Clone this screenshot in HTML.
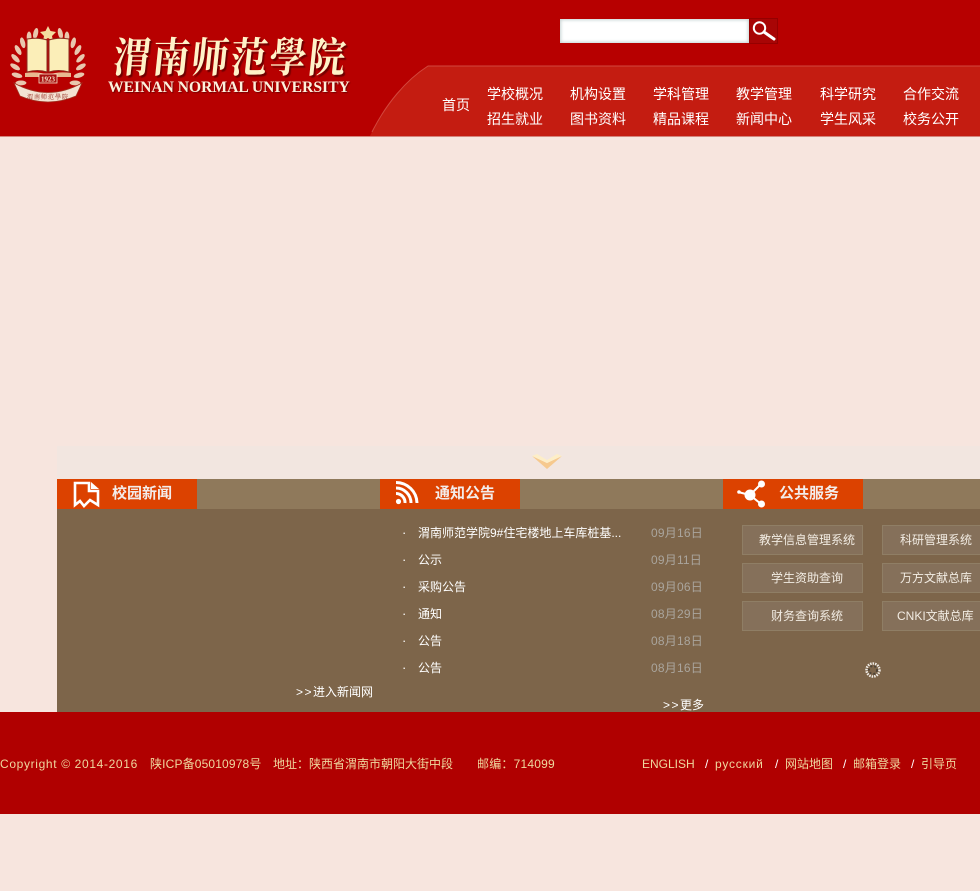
<!DOCTYPE html>
<html lang="zh">
<head>
<meta charset="utf-8">
<title>渭南师范学院</title>
<style>
html,body{margin:0;padding:0}
body{width:980px;height:891px;overflow:hidden;background:#f7e5de;position:relative;font-family:"Liberation Sans","WenQuanYi Zen Hei","Noto Sans CJK SC",sans-serif;font-size:13px}
.a{position:absolute;white-space:nowrap}
.nav{color:#fff;font-size:14px;line-height:20px;font-family:"Liberation Sans","Noto Sans CJK SC",sans-serif}
.tab{color:#f3ecea;font-size:15px;font-weight:bold;line-height:20px;font-family:"Liberation Sans","Noto Sans CJK SC",sans-serif}
.li{color:#fff;font-size:12px;line-height:18px;font-family:"Liberation Sans","Noto Sans CJK SC",sans-serif}
.d{color:#aaa59d;font-size:12px;line-height:18px;letter-spacing:.2px;font-family:"Liberation Sans","Noto Sans CJK SC",sans-serif}
.btn{box-sizing:border-box;height:30px;border:1px solid #8f7e65;background:#85705a;color:#f2ece3;font-size:12px;line-height:28px;font-family:"Liberation Sans","Noto Sans CJK SC",sans-serif}
.f{color:#efd79e;font-size:12px;line-height:18px;font-family:"Liberation Sans","Noto Sans CJK SC",sans-serif}
.s{color:#fff;font-size:13px;line-height:18px}
.g{letter-spacing:1.5px}
</style>
</head>
<body>
<div class="a" style="left:0;top:0;width:980px;height:136px;background:#b70000"></div>
<svg class="a" style="left:0;top:0" width="980" height="137" viewBox="0 0 980 137">
<path d="M370 136C384 106 405 80 428 66H980V136Z" fill="#c41c11"/>
<path d="M372 132C386 104 406 80 428 66H980" fill="none" stroke="#d2483e" stroke-width="1"/>
<rect x="0" y="136" width="980" height="1" fill="#d5847c"/>
<g transform="translate(48 64)">
<path d="M0 -38L2.5 -33 8 -32 4 -28 5 -23 0 -26 -5 -23 -4 -28 -8 -32 -2.5 -33Z" fill="#f3dca0"/>
<g fill="#e9c7ae">
<ellipse rx="2.4" ry="5.5" transform="rotate(-125) translate(0 -33) rotate(35)"/>
<ellipse rx="2.4" ry="5.5" transform="rotate(-110) translate(0 -33) rotate(35)"/>
<ellipse rx="2.4" ry="5.5" transform="rotate(-95) translate(0 -33) rotate(35)"/>
<ellipse rx="2.4" ry="5.5" transform="rotate(-80) translate(0 -33) rotate(35)"/>
<ellipse rx="2.4" ry="5.5" transform="rotate(-65) translate(0 -33) rotate(35)"/>
<ellipse rx="2.4" ry="5.5" transform="rotate(-50) translate(0 -33) rotate(35)"/>
<ellipse rx="2.4" ry="5.5" transform="rotate(-35) translate(0 -33) rotate(35)"/>
<ellipse rx="2.4" ry="5.5" transform="rotate(-22) translate(0 -33) rotate(35)"/>
<ellipse rx="2.4" ry="5.5" transform="rotate(125) translate(0 -33) rotate(-35)"/>
<ellipse rx="2.4" ry="5.5" transform="rotate(110) translate(0 -33) rotate(-35)"/>
<ellipse rx="2.4" ry="5.5" transform="rotate(95) translate(0 -33) rotate(-35)"/>
<ellipse rx="2.4" ry="5.5" transform="rotate(80) translate(0 -33) rotate(-35)"/>
<ellipse rx="2.4" ry="5.5" transform="rotate(65) translate(0 -33) rotate(-35)"/>
<ellipse rx="2.4" ry="5.5" transform="rotate(50) translate(0 -33) rotate(-35)"/>
<ellipse rx="2.4" ry="5.5" transform="rotate(35) translate(0 -33) rotate(-35)"/>
<ellipse rx="2.4" ry="5.5" transform="rotate(22) translate(0 -33) rotate(-35)"/>
</g>
<path d="M-21 -25Q-10 -27 -1 -24V8Q-10 5 -21 8Z" fill="#fbeeb8" stroke="#8c2a20"/>
<path d="M21 -25Q10 -27 1 -24V8Q10 5 21 8Z" fill="#fbeeb8" stroke="#8c2a20"/>
<path d="M-23 9Q-10 7 0 11Q10 7 23 9V13H-23Z" fill="#e8b890"/>
<rect x="-9" y="10" width="18" height="9" fill="#a81010" stroke="#f7e3c8" stroke-width=".8"/>
<text x="0" y="17.5" text-anchor="middle" font-size="7" font-weight="bold" fill="#f7e3c8" font-family="Liberation Serif,serif">1923</text>
<path d="M-34 19Q0 38 34 19L28 32Q0 44 -28 32Z" fill="#f3e2d2" stroke="#a03020" stroke-width=".8"/>
<text x="0" y="35" text-anchor="middle" font-size="6" fill="#8c1a10" font-family="Noto Serif CJK SC,serif" letter-spacing="1">渭南师范學院</text>
</g>
</svg>
<div class="a" style="left:114px;top:26px;font-size:37px;line-height:56px;letter-spacing:2px;color:#fff2c8;font-weight:bold;font-family:'Noto Serif CJK SC',serif;text-shadow:2px 2px 1px #6d0000;transform:skewX(-6deg) scaleY(1.12);transform-origin:left center">渭南师范學院</div>
<div class="a" style="left:108px;top:79px;font-size:15.6px;line-height:18px;color:#fdf0dc;font-weight:bold;font-family:'Liberation Serif',serif;text-shadow:1px 1px 1px #700000">WEINAN NORMAL UNIVERSITY</div>

<div class="a" style="left:560px;top:19px;width:189px;height:24px;box-sizing:border-box;background:#fff;box-shadow:inset 0 0 3px 1px #c5d2d2"></div>
<div class="a" style="left:749px;top:18px;width:29px;height:26px;background:#a80505;box-sizing:border-box;border:1px solid #950000"></div>
<svg class="a" style="left:749px;top:18px" width="29" height="26" viewBox="0 0 29 26"><circle cx="10.5" cy="10" r="5.7" fill="none" stroke="#fff" stroke-width="2"/><path d="M15 14L25 21" stroke="#fff" stroke-width="3" stroke-linecap="round"/></svg>

<div class="a nav" style="left:442px;top:95px">首页</div>
<div class="a nav" style="left:487px;top:84px">学校概况</div><div class="a nav" style="left:570px;top:84px">机构设置</div><div class="a nav" style="left:653px;top:84px">学科管理</div><div class="a nav" style="left:736px;top:84px">教学管理</div><div class="a nav" style="left:820px;top:84px">科学研究</div><div class="a nav" style="left:903px;top:84px">合作交流</div>
<div class="a nav" style="left:487px;top:109px">招生就业</div><div class="a nav" style="left:570px;top:109px">图书资料</div><div class="a nav" style="left:653px;top:109px">精品课程</div><div class="a nav" style="left:736px;top:109px">新闻中心</div><div class="a nav" style="left:820px;top:109px">学生风采</div><div class="a nav" style="left:903px;top:109px">校务公开</div>

<div class="a" style="left:57px;top:446px;width:923px;height:33px;background:#f2e6e0"></div>
<svg class="a" style="left:531px;top:453px" width="32" height="17" viewBox="0 0 32 17"><path d="M1 3L16 10 31 3 16 16Z" fill="#f6c98e"/><path d="M1 3L6 1 16 7 26 1 31 3 16 10Z" fill="#fdeec8"/></svg>
<div class="a" style="left:57px;top:479px;width:923px;height:30px;background:#8f795b"></div>
<div class="a" style="left:57px;top:509px;width:923px;height:203px;background:#7d654a"></div>

<div class="a" style="left:57px;top:479px;width:140px;height:30px;background:#dc4200"></div>
<div class="a" style="left:380px;top:479px;width:140px;height:30px;background:#dc4200"></div>
<div class="a" style="left:723px;top:479px;width:140px;height:30px;background:#dc4200"></div>
<svg class="a" style="left:57px;top:479px" width="140" height="30" viewBox="0 0 140 30"><path d="M18 4H32V12H41V26L33 21 27 27 23 22 18 26Z" fill="none" stroke="#fff" stroke-width="2.6"/><path d="M34 3L42 10H34Z" fill="#fff"/></svg>
<svg class="a" style="left:380px;top:479px" width="140" height="30" viewBox="0 0 140 30"><circle cx="18.5" cy="22.5" r="2.6" fill="#fff"/><path d="M16 14.5A9 9 0 0 1 25 24M16 9A15 15 0 0 1 31 24M16 3.5A21 21 0 0 1 37 24" fill="none" stroke="#fff" stroke-width="3"/></svg>
<svg class="a" style="left:723px;top:479px" width="140" height="30" viewBox="0 0 140 30"><path d="M15 13L27 16M38 5L27 16 38 25" fill="none" stroke="#fff" stroke-width="2"/><circle cx="27" cy="16" r="5.5" fill="#fff"/><circle cx="38.5" cy="5" r="3.5" fill="#fff"/><circle cx="38.5" cy="25" r="3.5" fill="#fff"/><circle cx="16" cy="13" r="1.8" fill="#fff"/></svg>
<div class="a tab" style="left:112px;top:484px">校园新闻</div>
<div class="a tab" style="left:435px;top:484px">通知公告</div>
<div class="a tab" style="left:779px;top:484px">公共服务</div>

<div class="a s" style="left:402px;top:524px">·</div><div class="a li" style="left:418px;top:524px">渭南师范学院9#住宅楼地上车库桩基...</div><div class="a d" style="left:651px;top:524px">09月16日</div>
<div class="a s" style="left:402px;top:551px">·</div><div class="a li" style="left:418px;top:551px">公示</div><div class="a d" style="left:651px;top:551px">09月11日</div>
<div class="a s" style="left:402px;top:578px">·</div><div class="a li" style="left:418px;top:578px">采购公告</div><div class="a d" style="left:651px;top:578px">09月06日</div>
<div class="a s" style="left:402px;top:605px">·</div><div class="a li" style="left:418px;top:605px">通知</div><div class="a d" style="left:651px;top:605px">08月29日</div>
<div class="a s" style="left:402px;top:632px">·</div><div class="a li" style="left:418px;top:632px">公告</div><div class="a d" style="left:651px;top:632px">08月18日</div>
<div class="a s" style="left:402px;top:659px">·</div><div class="a li" style="left:418px;top:659px">公告</div><div class="a d" style="left:651px;top:659px">08月16日</div>
<div class="a li" style="left:296px;top:683px"><span class="g">&gt;&gt;</span>进入新闻网</div>
<div class="a li" style="left:663px;top:696px"><span class="g">&gt;&gt;</span>更多</div>

<div class="a btn" style="left:742px;top:525px;width:121px;padding-left:16px">教学信息管理系统</div>
<div class="a btn" style="left:882px;top:525px;width:110px;padding-left:17px">科研管理系统</div>
<div class="a btn" style="left:742px;top:563px;width:121px;padding-left:28px">学生资助查询</div>
<div class="a btn" style="left:882px;top:563px;width:110px;padding-left:17px">万方文献总库</div>
<div class="a btn" style="left:742px;top:601px;width:121px;padding-left:28px">财务查询系统</div>
<div class="a btn" style="left:882px;top:601px;width:110px;padding-left:14px">CNKI文献总库</div>
<svg class="a" style="left:864px;top:661px" width="18" height="18" viewBox="0 0 18 18"><circle cx="9" cy="9" r="6.5" fill="none" stroke="#f0ece6" stroke-width="2.5" stroke-dasharray="1.5 1"/><circle cx="9" cy="9" r="4" fill="none" stroke="#4d4438" stroke-width="2" stroke-dasharray="2 2"/></svg>

<div class="a" style="left:0;top:712px;width:980px;height:102px;background:#b00000"></div>
<div class="a f" style="left:0;top:755px;letter-spacing:.65px">Copyright © 2014-2016</div>
<div class="a f" style="left:150px;top:755px;letter-spacing:.15px">陕ICP备05010978号</div>
<div class="a f" style="left:273px;top:755px">地址：陕西省渭南市朝阳大街中段</div>
<div class="a f" style="left:477px;top:755px;letter-spacing:.2px">邮编：714099</div>
<div class="a f" style="left:642px;top:755px">ENGLISH</div>
<div class="a f" style="left:705px;top:755px;color:#fff">/</div>
<div class="a f" style="left:715px;top:755px;letter-spacing:.8px">русский</div>
<div class="a f" style="left:775px;top:755px;color:#fff">/</div>
<div class="a f" style="left:785px;top:755px">网站地图</div>
<div class="a f" style="left:843px;top:755px;color:#fff">/</div>
<div class="a f" style="left:853px;top:755px">邮箱登录</div>
<div class="a f" style="left:911px;top:755px;color:#fff">/</div>
<div class="a f" style="left:921px;top:755px">引导页</div>
</body>
</html>
